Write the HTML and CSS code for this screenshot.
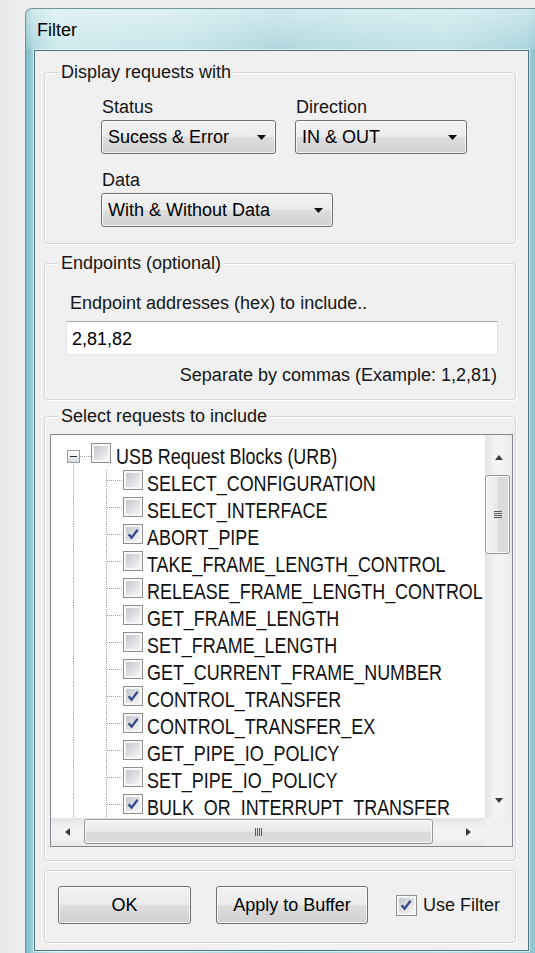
FILE: index.html
```html
<!DOCTYPE html>
<html lang="en">
<head>
<meta charset="utf-8">
<title>Filter</title>
<link rel="stylesheet" href="styles.css">
</head>
<body>
<div class="window">
  <div class="titlebar">Filter</div>
  <div class="client">

    <div class="group g-display">
      <div class="group-title">Display requests with</div>
      <div class="group-body">
        <div class="field-row">
          <div class="field">
            <div class="field-label">Status</div>
            <div class="combo w-status"><span>Sucess &amp; Error</span><svg class="caret" width="9" height="5" viewBox="0 0 9 5"><path d="M0 0H9L4.5 5Z" fill="#111"/></svg></div>
          </div>
          <div class="field">
            <div class="field-label">Direction</div>
            <div class="combo w-direction"><span>IN &amp; OUT</span><svg class="caret" width="9" height="5" viewBox="0 0 9 5"><path d="M0 0H9L4.5 5Z" fill="#111"/></svg></div>
          </div>
        </div>
        <div class="field data-field">
          <div class="field-label">Data</div>
          <div class="combo w-data"><span>With &amp; Without Data</span><svg class="caret" width="9" height="5" viewBox="0 0 9 5"><path d="M0 0H9L4.5 5Z" fill="#111"/></svg></div>
        </div>
      </div>
    </div>

    <div class="group g-endpoints">
      <div class="group-title">Endpoints (optional)</div>
      <div class="group-body">
        <div class="ep-label">Endpoint addresses (hex) to include..</div>
        <div class="textbox">2,81,82</div>
        <div class="ep-note">Separate by commas (Example: 1,2,81)</div>
      </div>
    </div>

    <div class="group g-requests">
      <div class="group-title">Select requests to include</div>
      <div class="group-body">
        <div class="tree">
          <div class="viewport">
            <div class="node root"><span class="expander"><span class="pm"></span></span><span class="cb"></span><span class="text">USB Request Blocks (URB)</span></div>
            <div class="node"><span class="rail"></span><span class="twig"></span><span class="cb"></span><span class="text">SELECT_CONFIGURATION</span></div>
            <div class="node"><span class="rail"></span><span class="twig"></span><span class="cb"></span><span class="text">SELECT_INTERFACE</span></div>
            <div class="node"><span class="rail"></span><span class="twig"></span><span class="cb checked"><svg viewBox="0 0 14 14" width="14" height="14"><path d="M2.6 7.2L5.6 10.6L11.6 2.8" fill="none" stroke="#34498a" stroke-width="2.3"/></svg></span><span class="text">ABORT_PIPE</span></div>
            <div class="node"><span class="rail"></span><span class="twig"></span><span class="cb"></span><span class="text">TAKE_FRAME_LENGTH_CONTROL</span></div>
            <div class="node"><span class="rail"></span><span class="twig"></span><span class="cb"></span><span class="text">RELEASE_FRAME_LENGTH_CONTROL</span></div>
            <div class="node"><span class="rail"></span><span class="twig"></span><span class="cb"></span><span class="text">GET_FRAME_LENGTH</span></div>
            <div class="node"><span class="rail"></span><span class="twig"></span><span class="cb"></span><span class="text">SET_FRAME_LENGTH</span></div>
            <div class="node"><span class="rail"></span><span class="twig"></span><span class="cb"></span><span class="text">GET_CURRENT_FRAME_NUMBER</span></div>
            <div class="node"><span class="rail"></span><span class="twig"></span><span class="cb checked"><svg viewBox="0 0 14 14" width="14" height="14"><path d="M2.6 7.2L5.6 10.6L11.6 2.8" fill="none" stroke="#34498a" stroke-width="2.3"/></svg></span><span class="text">CONTROL_TRANSFER</span></div>
            <div class="node"><span class="rail"></span><span class="twig"></span><span class="cb checked"><svg viewBox="0 0 14 14" width="14" height="14"><path d="M2.6 7.2L5.6 10.6L11.6 2.8" fill="none" stroke="#34498a" stroke-width="2.3"/></svg></span><span class="text">CONTROL_TRANSFER_EX</span></div>
            <div class="node"><span class="rail"></span><span class="twig"></span><span class="cb"></span><span class="text">GET_PIPE_IO_POLICY</span></div>
            <div class="node"><span class="rail"></span><span class="twig"></span><span class="cb"></span><span class="text">SET_PIPE_IO_POLICY</span></div>
            <div class="node"><span class="rail"></span><span class="twig"></span><span class="cb checked"><svg viewBox="0 0 14 14" width="14" height="14"><path d="M2.6 7.2L5.6 10.6L11.6 2.8" fill="none" stroke="#34498a" stroke-width="2.3"/></svg></span><span class="text">BULK_OR_INTERRUPT_TRANSFER</span></div>
          </div>

          <div class="vscroll">
            <div class="sb-btn up"><svg width="8" height="5" viewBox="0 0 8 5"><path d="M0 5L4 0L8 5Z" fill="#3c3c3c"/></svg></div>
            <div class="thumb-v"><svg width="8" height="7" viewBox="0 0 8 7"><path d="M0 0.5H8M0 2.5H8M0 4.5H8M0 6.5H8" stroke="#5c5c5c" stroke-width="1"/></svg></div>
            <div class="track"></div>
            <div class="sb-btn down"><svg width="8" height="5" viewBox="0 0 8 5"><path d="M0 0L4 5L8 0Z" fill="#3c3c3c"/></svg></div>
          </div>

          <div class="hscroll">
            <div class="sb-btn left"><svg width="5" height="8" viewBox="0 0 5 8"><path d="M5 0L0 4L5 8Z" fill="#3c3c3c"/></svg></div>
            <div class="thumb-h"><svg width="7" height="8" viewBox="0 0 7 8"><path d="M0.5 0V8M2.5 0V8M4.5 0V8M6.5 0V8" stroke="#5c5c5c" stroke-width="1"/></svg></div>
            <div class="track"></div>
            <div class="sb-btn right"><svg width="5" height="8" viewBox="0 0 5 8"><path d="M0 0L5 4L0 8Z" fill="#3c3c3c"/></svg></div>
          </div>

          <div class="corner"></div>
        </div>
      </div>
    </div>

    <div class="group g-actions">
      <div class="group-body">
        <div class="btn w-ok">OK</div>
        <div class="btn w-apply">Apply to Buffer</div>
        <div class="use-filter"><span class="cb checked"><svg viewBox="0 0 14 14" width="14" height="14"><path d="M2.6 7.2L5.6 10.6L11.6 2.8" fill="none" stroke="#34498a" stroke-width="2.3"/></svg></span><span>Use Filter</span></div>
      </div>
    </div>

  </div>
</div>
</body>
</html>
```
FILE: styles.css
```css
html, body {
  margin: 0;
  height: 100%;
  overflow: hidden;
}

body {
  background: linear-gradient(to right, #e8e8e8, #eeeeee 25px);
  font-family: "Liberation Sans", Arial, sans-serif;
  font-size: 18px;
  color: #151515;
}

/* Aero glass frame */
.window {
  box-sizing: border-box;
  width: 510px;
  height: 960px;
  margin: 8px 0 0 25px;
  padding: 0 6px 0 8px;
  border: 1px solid #6b959f;
  border-right: 0;
  border-radius: 7px 0 0 0;
  display: flex;
  flex-direction: column;
  background:
    linear-gradient(180deg, rgba(255, 255, 255, 0.5) 0, rgba(255, 255, 255, 0.15) 40px, rgba(255, 255, 255, 0) 41px),
    linear-gradient(90deg, #7cb9c6 0, #92c8d2 4px, #a6d4dc 8px, #c6e6ea 30px, #bde1e6 150px, #a3d2da 250px, #afd9e0 330px, #b6dde3 420px, #9ecfd9 500px, #88c2cd 510px);
}

.titlebar {
  box-sizing: border-box;
  height: 41px;
  padding: 11px 0 0 3px;
  line-height: 20px;
  color: #000;
}

.client {
  box-sizing: border-box;
  height: 901px;
  border: 1px solid #4f727c;
  background: #f0f0f0;
  box-shadow: 0 0 0 1px rgba(255, 255, 255, 0.55);
}

/* Group boxes */
.group {
  margin: 0 12px 0 9px;
  border: 1px solid #d0d7dc;
  border-radius: 3px;
  box-shadow: inset 1px 1px 0 #fff, 1px 1px 0 #fff;
}

.group-title {
  width: fit-content;
  height: 20px;
  margin: -11px 0 0 13px;
  padding: 0 3px;
  line-height: 20px;
  background: #f0f0f0;
}

.g-display { margin-top: 21px; }
.g-display .group-body { padding: 15px 0 16px 56px; }

.field-row {
  display: flex;
  gap: 19px;
}

.field-label {
  height: 20px;
  margin-bottom: 3px;
  padding-left: 1px;
  line-height: 20px;
}

.data-field { margin-top: 16px; }

.combo {
  box-sizing: border-box;
  height: 34px;
  display: flex;
  align-items: center;
  justify-content: space-between;
  padding: 0 9px 0 6px;
  border: 1px solid #707070;
  border-radius: 3px;
  line-height: 20px;
  color: #000;
  background: linear-gradient(#f3f3f3, #ebebeb 49%, #dedede 50%, #d0d0d0);
  box-shadow: inset 0 0 0 1px rgba(255, 255, 255, 0.75);
}

.w-status { width: 175px; }
.w-direction { width: 172px; }
.w-data { width: 232px; }

.caret { flex: none; }

.g-endpoints { margin-top: 19px; }
.g-endpoints .group-body { padding: 20px 0 14px 21px; }

.ep-label {
  padding-left: 4px;
  margin-bottom: 8px;
  line-height: 20px;
}

.textbox {
  box-sizing: border-box;
  width: 432px;
  height: 34px;
  padding: 0 5px;
  border: 1px solid;
  border-color: #abadb3 #dbdfe6 #e3e9ef #e2e3ea;
  background: #fff;
  line-height: 34px;
  color: #000;
}

.ep-note {
  box-sizing: border-box;
  width: 432px;
  margin-top: 10px;
  padding-right: 1px;
  text-align: right;
  line-height: 20px;
}

/* Request tree */
.g-requests { margin-top: 16px; }
.g-requests .group-body { padding: 8px 0 13px 5px; }

.tree {
  width: fit-content;
  display: grid;
  grid-template-columns: 434px 27px;
  grid-template-rows: 383px 28px;
  border: 1px solid #828790;
  background: #fff;
}

.viewport {
  box-sizing: border-box;
  overflow: hidden;
  padding: 8px 0 0 10px;
  font-size: 22px;
  color: #111;
}

.node {
  display: flex;
  height: 27px;
  line-height: 27px;
  white-space: nowrap;
}

/* the list uses a narrow face: squeeze the regular one horizontally */
.node .text {
  display: inline-block;
  margin-left: 4px;
  transform: scaleX(0.815);
  transform-origin: 0 50%;
}

.node.root .text { margin-left: 5px; }

.expander {
  box-sizing: border-box;
  flex: none;
  width: 30px;
  height: 27px;
  padding: 7px 0 0 6px;
  background:
    repeating-linear-gradient(to right, #a0a0a0 0 1px, transparent 1px 2px) 19px 13px / 11px 1px no-repeat,
    repeating-linear-gradient(to bottom, #a0a0a0 0 1px, transparent 1px 2px) 12px 21px / 1px 6px no-repeat;
}

.pm {
  display: block;
  box-sizing: border-box;
  width: 13px;
  height: 13px;
  border: 1px solid #8f9ca6;
  background:
    linear-gradient(#2a2a2a, #2a2a2a) center / 7px 1px no-repeat,
    linear-gradient(#ffffff, #d8dde2);
}

.rail {
  flex: none;
  width: 30px;
  height: 27px;
  background: repeating-linear-gradient(to bottom, #a0a0a0 0 1px, transparent 1px 2px) 12px 0 / 1px 100% no-repeat;
}

.twig {
  flex: none;
  width: 32px;
  height: 27px;
  background:
    repeating-linear-gradient(to right, #a0a0a0 0 1px, transparent 1px 2px) 16px 10px / 16px 1px no-repeat,
    repeating-linear-gradient(to bottom, #a0a0a0 0 1px, transparent 1px 2px) 15px 0 / 1px 100% no-repeat;
}

/* Vista style check box */
.cb {
  box-sizing: border-box;
  flex: none;
  width: 20px;
  height: 20px;
  padding: 2px;
  border: 1px solid #8e8f8f;
  background:
    linear-gradient(135deg, #c3c8ce 0%, #dfe1e4 55%, #f6f6f6 100%) content-box,
    #f7f7f7;
  display: flex;
}

.cb svg { display: block; }

/* Scroll bars */
.vscroll {
  display: flex;
  flex-direction: column;
  background: linear-gradient(to right, #e3e3e3, #f3f3f3 35%, #f3f3f3 65%, #e9e9e9);
}

.hscroll {
  display: flex;
  background: linear-gradient(to bottom, #e3e3e3, #f3f3f3 35%, #f3f3f3 65%, #e9e9e9);
}

.sb-btn {
  flex: none;
  display: flex;
  align-items: center;
  justify-content: center;
}

.sb-btn.up { height: 40px; padding-top: 4px; box-sizing: border-box; }
.sb-btn.down { height: 36px; }
.sb-btn.left { width: 33px; }
.sb-btn.right { width: 33px; }

.track { flex: 1; }

.thumb-v {
  box-sizing: border-box;
  flex: none;
  width: 25px;
  height: 79px;
  display: flex;
  align-items: center;
  justify-content: center;
  border: 1px solid #979797;
  border-radius: 3px;
  background: linear-gradient(to right, #f4f4f4, #e8e8e8 50%, #d9d9d9 51%, #dedede);
  box-shadow: inset 0 0 0 1px rgba(255, 255, 255, 0.8);
}

.thumb-h {
  box-sizing: border-box;
  flex: none;
  width: 349px;
  height: 25px;
  margin-top: 1px;
  display: flex;
  align-items: center;
  justify-content: center;
  border: 1px solid #979797;
  border-radius: 3px;
  background: linear-gradient(to bottom, #f4f4f4, #e8e8e8 50%, #d9d9d9 51%, #dedede);
  box-shadow: inset 0 0 0 1px rgba(255, 255, 255, 0.8);
}

.corner { background: #f0f0f0; }

/* Bottom action row */
.g-actions { margin-top: 9px; }
.g-actions .group-body {
  display: flex;
  align-items: center;
  padding: 15px 0 18px 13px;
}

.btn {
  box-sizing: border-box;
  height: 38px;
  display: flex;
  align-items: center;
  justify-content: center;
  border: 1px solid #707070;
  border-radius: 3px;
  color: #000;
  background: linear-gradient(#f3f3f3, #ebebeb 49%, #dedede 50%, #d0d0d0);
  box-shadow: inset 0 0 0 1px rgba(255, 255, 255, 0.75);
}

.w-ok { width: 133px; }
.w-apply { width: 152px; margin-left: 25px; }

.use-filter {
  display: flex;
  align-items: center;
  gap: 6px;
  margin-left: 28px;
  line-height: 20px;
}

.use-filter .cb { width: 21px; height: 21px; }
```
